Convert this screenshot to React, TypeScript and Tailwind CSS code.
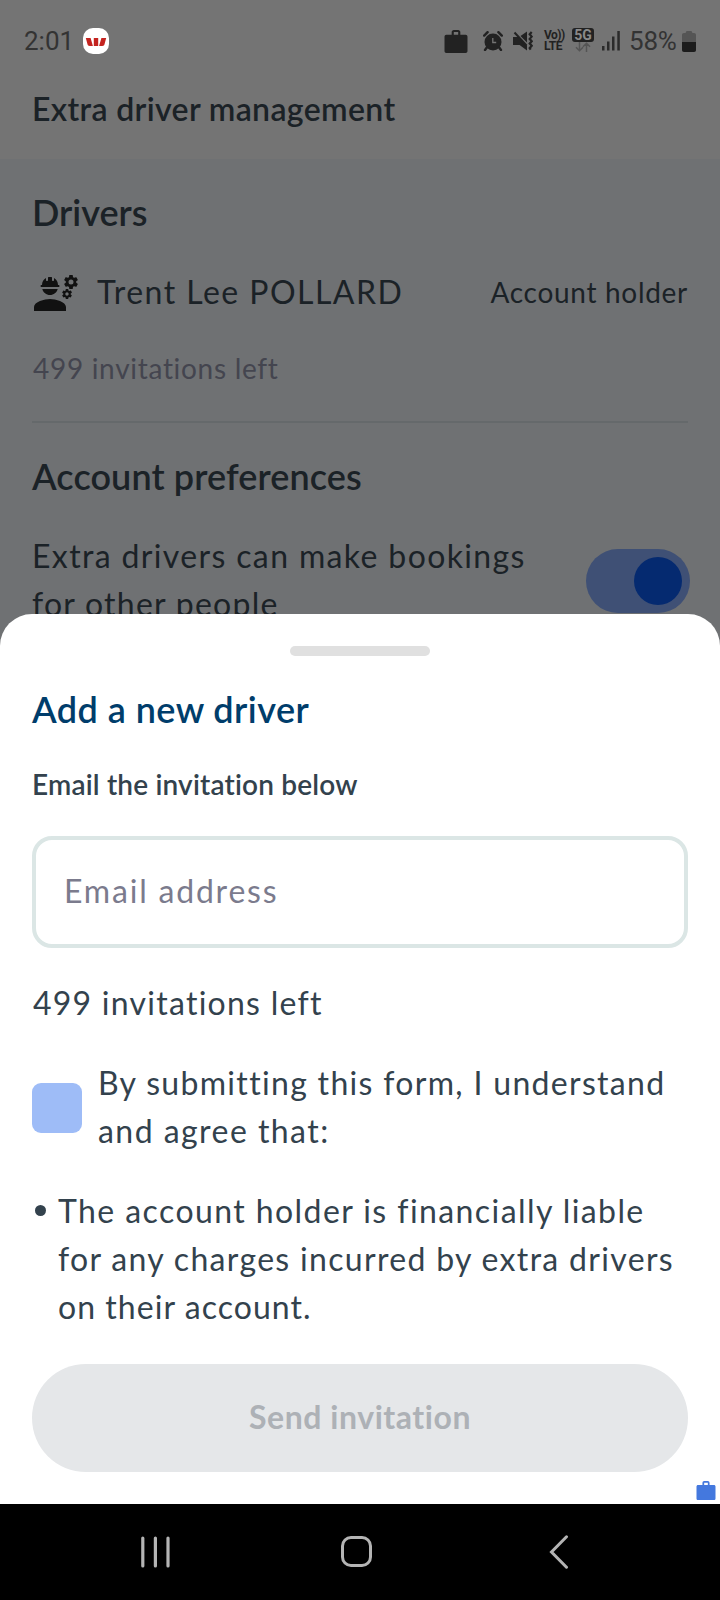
import { MdEngineering } from "react-icons/md";

const Briefcase = ({ className }: { className: string }) => (
  <svg viewBox="0 0 24 24" className={className} fill="currentColor">
    <path
      fillRule="evenodd"
      d="M7.5 5V2.4C7.5 1 8.4 0 9.8 0h4.4c1.400 0 2.300 1 2.300 2.400V5H22c1.200 0 2 .8 2 2v15c0 1.200-.8 2-2 2H2c-1.200 0-2-.8-2-2V7c0-1.200.8-2 2-2zm2.200 0h4.600V2.200H9.700z"
    />
  </svg>
);

const StatusBar = () => (
  <div className="flex h-[82px] items-center pl-[24px] font-[Roboto] text-[26px] leading-8 text-[#333333]">
    <span className="w-[59px]">2:01</span>
    <svg viewBox="0 0 26 26" className="h-[26px] w-[26px]">
      <rect width="26" height="26" rx="10" fill="#ffffff" />
      <path
        d="M2.800 10h4.800l2.300 8H6.800C5.300 18 4.800 17.400 4.500 16.300zM10.800 10h4.400v8h-4.400zM18.400 10h4.800l-1.700 6.300c-.3 1.100-.8 1.700-2.300 1.700h-3.100z"
        fill="#c4231f"
      />
    </svg>
    <Briefcase className="ml-[335px] h-[23px] w-6 text-[#222222]" />
    <svg viewBox="0 0 20 20" className="ml-[15px] h-5 w-5 text-[#222222]">
      <circle cx="10" cy="11" r="8.500" fill="currentColor" />
      <path
        d="M1.200 4.600L4.600 1.200M18.800 4.600L15.400 1.200M3.800 16.500L2 19M16.200 16.500L18 19"
        stroke="currentColor"
        strokeWidth="2.400"
        strokeLinecap="round"
      />
      <path d="M9.800 7V11.500H13.200" stroke="#747474" strokeWidth="1.300" fill="none" />
    </svg>
    <svg viewBox="0 0 20 20" className="ml-[10px] h-5 w-5 text-[#222222]">
      <path d="M0 6h5.500l8.500 8.500V19.500L6.600 14H0zM7.500 5L14 .5v11z" fill="currentColor" />
      <path d="M1.500 1.500l12 13" stroke="currentColor" strokeWidth="2" />
      <path
        d="M18.700 1l-2 2.300 2 2.300-2 2.300 2 2.300-2 2.300 2 2.300-2 2.300 1 1.500"
        stroke="currentColor"
        strokeWidth="2.200"
        fill="none"
      />
    </svg>
    <div className="ml-[11px] w-[21px] text-[12px] leading-[11px] font-bold text-[#222222]">
      <div className="h-[11px] whitespace-nowrap tracking-[-0.5px]">Vo))</div>
      <div className="h-[11px] tracking-[-0.4px]">LTE</div>
    </div>
    <div className="ml-[7px] flex w-[22px] flex-col items-center pb-[2px]">
      <div className="h-[14px] w-full rounded-[3px] bg-[#222222] text-center text-[14px] leading-[14px] font-bold text-[#8a8a8a]">
        5G
      </div>
      <svg viewBox="0 0 16 10" className="h-[10px] w-4">
        <path
          d="M4.500 0v8.500M1 5.200l3.500 3.500L8 5.200M11.500 10V1.500M8 4.800l3.500-3.500L15 4.800"
          stroke="#555555"
          strokeWidth="1.500"
          fill="none"
        />
      </svg>
    </div>
    <svg viewBox="0 0 18 20" className="ml-[8px] h-5 w-[18px]" fill="#2b2b2b">
      <rect x="0" y="15" width="2.500" height="4.500" />
      <rect x="5" y="10.500" width="2.500" height="9" />
      <rect x="10" y="5.500" width="2.500" height="14" />
      <rect x="15.300" y="0" width="2.500" height="19.500" />
    </svg>
    <span className="ml-[9px] w-[53px] tracking-[-0.2px]">58%</span>
    <svg viewBox="0 0 14 21" className="h-[21px] w-[14px]">
      <path
        d="M4.500 0h5l1 2H12c1.300 0 2 .7 2 2v7H0V4c0-1.300.7-2 2-2h1.500z"
        fill="#555555"
      />
      <path d="M0 11h14v8c0 1.300-.7 2-2 2H2c-1.300 0-2-.7-2-2z" fill="#1c1c1c" />
    </svg>
  </div>
);

const NavBar = () => (
  <div className="flex h-24 items-center bg-black pb-px pl-[140px] text-[#b4b4b4]">
    <svg viewBox="0 0 32 32" className="h-8 w-8" stroke="currentColor" strokeWidth="3.200" strokeLinecap="round">
      <path d="M2.800 2v28M15.400 2v28M28 2v28" />
    </svg>
    <div className="ml-[169px] h-[31px] w-[31px] rounded-[10px] border-[3px] border-current" />
    <svg
      viewBox="0 0 20 34"
      className="ml-[177px] h-[34px] w-5"
      fill="none"
      stroke="currentColor"
      strokeWidth="3"
      strokeLinecap="round"
    >
      <path d="M17.500 1.800L2.500 17l15 15.200" />
    </svg>
  </div>
);

const App = () => {
  return (
    <div className="h-[1600px] w-[720px] overflow-hidden bg-[#6f7173] font-[Lato,sans-serif] text-[32px] leading-[48px] whitespace-nowrap">
      <div className="h-[614px] overflow-hidden text-[#1b2227]">
        <header className="h-[159px] bg-[#747474]">
          <StatusBar />
          <h1 className="px-8 pt-[3px] font-semibold tracking-[0.35px]">Extra driver management</h1>
        </header>
        <section className="px-8 pt-[29px]">
          <h2 className="text-4xl leading-[48px] font-semibold">Drivers</h2>
          <div className="mt-8 flex h-12">
            <MdEngineering className="mt-px h-12 w-12 text-[#111111]" />
            <span className="ml-[17px] flex-1 tracking-[1.450px]">Trent Lee POLLARD</span>
            <span className="text-[28px] tracking-[0.7px]">Account holder</span>
          </div>
          <p className="mt-8 pl-px text-[28px] leading-10 tracking-[0.7px] text-[#44454f]">
            499 invitations left
          </p>
          <div className="mt-[33px] h-[2px] bg-[#65696b]" />
          <h2 className="mt-[29px] text-4xl leading-[48px] font-semibold tracking-[0.1px]">
            Account preferences
          </h2>
          <div className="mt-8 flex items-center">
            <p className="flex-1">
              <span className="block tracking-[1.360px]">Extra drivers can make bookings</span>
              <span className="block tracking-[1.25px]">for other people</span>
            </p>
            <div className="mt-[2px] -mr-[2px] flex h-16 w-[104px] items-center justify-end rounded-full bg-[#3f5075] pr-2">
              <div className="h-12 w-12 rounded-full bg-[#052a70]" />
            </div>
          </div>
        </section>
      </div>

      <div className="flex h-[890px] flex-col rounded-t-[32px] bg-white px-8 pt-8 text-[#33424d]">
        <div className="h-[10px] w-[140px] self-center rounded-full bg-[#e0e0e0]" />
        <h2 className="mt-[29px] text-4xl leading-[48px] font-semibold tracking-[0.45px] text-[#003d6b]">
          Add a new driver
        </h2>
        <p className="mt-[31px] text-[28px] leading-10 font-semibold tracking-[0.18px]">
          Email the invitation below
        </p>
        <input
          type="text"
          placeholder="Email address"
          className="mt-8 h-28 w-full rounded-[20px] border-4 border-[#dbe6e5] px-7 pb-1 tracking-[1.8px] outline-none placeholder:text-[#7b7b8d]"
        />
        <p className="mt-[31px] pl-px tracking-[1.25px]">499 invitations left</p>
        <div className="mt-8 flex items-center">
          <div className="mt-[2px] h-[50px] w-[50px] rounded-[9px] bg-[#9ebcf7]" />
          <p className="ml-4">
            <span className="block tracking-[1.32px]">By submitting this form, I understand</span>
            <span className="block tracking-[1.45px]">and agree that:</span>
          </p>
        </div>
        <div className="mt-8 flex">
          <div className="mt-[18px] ml-[3px] h-[11px] w-[11px] rounded-full bg-[#33424d]" />
          <p className="ml-3">
            <span className="block tracking-[1.42px]">The account holder is financially liable</span>
            <span className="block tracking-[1.32px]">for any charges incurred by extra drivers</span>
            <span className="block tracking-[1.050px]">on their account.</span>
          </p>
        </div>
        <button
          type="button"
          className="mt-[33px] h-[108px] rounded-full bg-[#e5e7e9] pb-[2px] font-bold tracking-[0.55px] text-[#adb1b6]"
        >
          Send invitation
        </button>
        <div className="-mr-8 flex h-8 items-center justify-end pt-[5px] pr-1">
          <Briefcase className="h-[19px] w-5 text-[#4478de]" />
        </div>
      </div>
      <NavBar />
    </div>
  );
};

export default App;
